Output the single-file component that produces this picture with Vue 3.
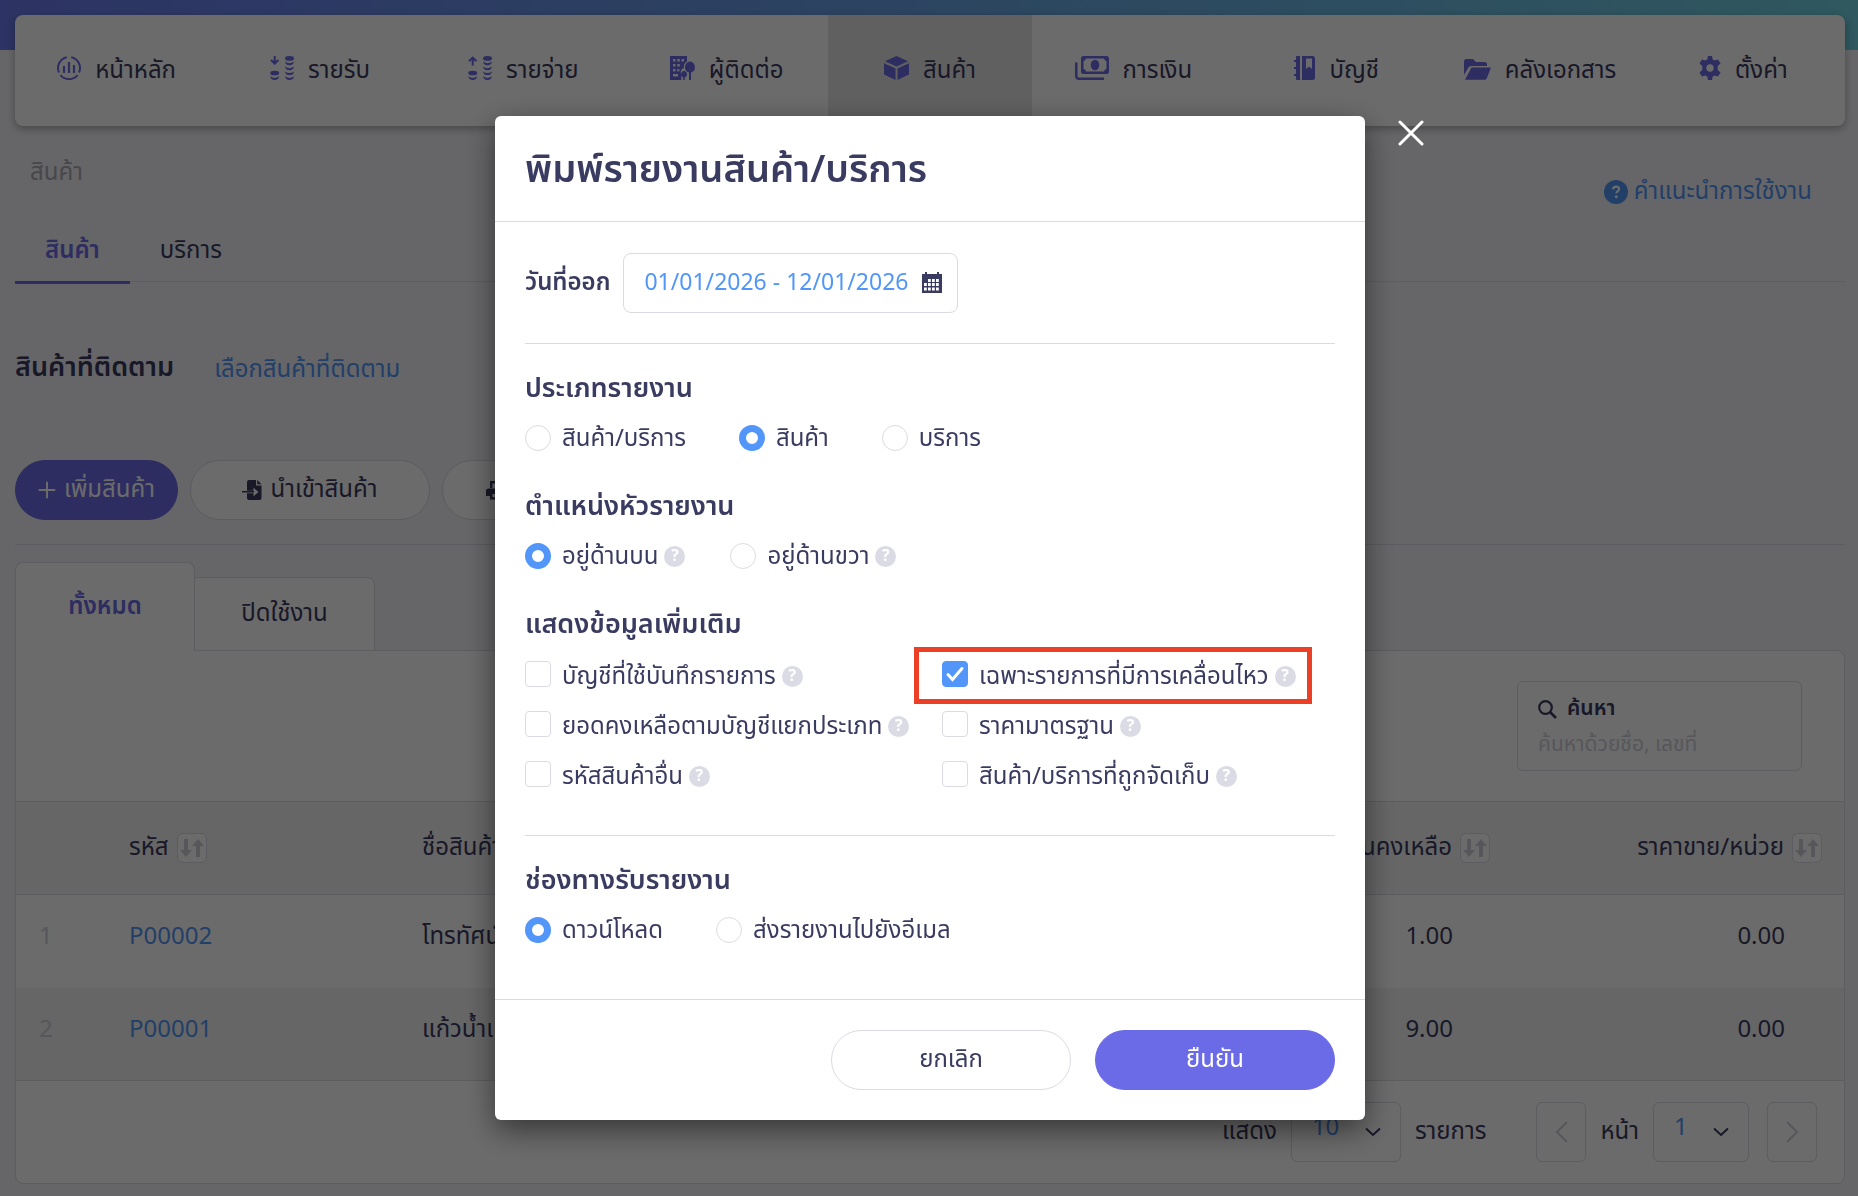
<template>
  <div class="page">
    <nav class="main-nav">
      <a
        v-for="item in menus"
        :key="item.label"
        href="#"
        class="nav-item"
        :class="{ active: item.active }"
      >
        <svg
          class="nav-icon"
          :width="item.width"
          height="24"
          :viewBox="`0 0 ${item.width} 24`"
          v-html="item.icon"
        ></svg>
        <span>{{ item.label }}</span>
      </a>
    </nav>

    <div class="page-head">
      <span class="breadcrumb">สินค้า</span>
      <a href="#" class="help-link">
        <svg width="24" height="24" viewBox="0 0 24 24">
          <circle cx="12" cy="12" r="12" fill="currentColor" />
          <path d="M9 9.400c.1-1.800 1.300-2.700 3.100-2.700s3 .9 3 2.400c0 2-2.700 2-2.700 4.100" fill="none" stroke="#fff" stroke-width="2.200" />
          <circle cx="12.300" cy="16.700" r="1.500" fill="#fff" />
        </svg>
        <span>คำแนะนำการใช้งาน</span>
      </a>
    </div>

    <div class="tabs">
      <button type="button" class="tab active">สินค้า</button>
      <button type="button" class="tab">บริการ</button>
    </div>

    <div class="follow">
      <h2>สินค้าที่ติดตาม</h2>
      <a href="#">เลือกสินค้าที่ติดตาม</a>
    </div>

    <div class="actions">
      <button type="button" class="btn btn-primary btn-add">
        <svg width="18" height="18" viewBox="0 0 18 18">
          <path d="M9 1.500v15M1.500 9h15" stroke="currentColor" stroke-width="2" stroke-linecap="round" />
        </svg>
        เพิ่มสินค้า
      </button>
      <button type="button" class="btn">
        <svg width="20" height="20" viewBox="0 0 20 20">
          <path d="M7 0h7v5.500h5.500V18a2 2 0 0 1-2 2H7a2 2 0 0 1-2-2v-4.800h6.500v3.100l5-4.300-5-4.300v3.100H5V2a2 2 0 0 1 2-2z" fill="currentColor" />
          <path d="M15.200 0l4.300 4.300h-4.300zM0 11h12v1.500H0z" fill="currentColor" />
        </svg>
        นำเข้าสินค้า
      </button>
      <button type="button" class="btn btn-print" aria-label="พิมพ์รายงาน">
        <svg width="20" height="20" viewBox="0 0 20 20">
          <path d="M4 8V1h10l2.500 2.500V8h-2.400V4.500L13 3.400H6.400V8z" fill="currentColor" />
          <path d="M3 8.500h14.500a2.500 2.500 0 0 1 2.500 2.500v5h-3.500v3.500H4V16H0v-5a2.500 2.500 0 0 1 3-2.500zM6.400 14v3.200h7.700V14z" fill="currentColor" fill-rule="evenodd" />
        </svg>
      </button>
    </div>

    <div class="card-tabs">
      <button type="button" class="card-tab active">ทั้งหมด</button>
      <button type="button" class="card-tab">ปิดใช้งาน</button>
    </div>

    <section class="card">
      <div class="search-row">
        <div class="search-box">
          <label for="search">
            <svg width="19" height="19" viewBox="0 0 19 19">
              <circle cx="7.500" cy="7.500" r="6.300" fill="none" stroke="currentColor" stroke-width="2.200" />
              <path d="M12 12l6 6" stroke="currentColor" stroke-width="2.600" />
            </svg>
            ค้นหา
          </label>
          <input id="search" v-model="keyword" type="text" placeholder="ค้นหาด้วยชื่อ, เลขที่" />
        </div>
      </div>

      <table>
        <colgroup>
          <col class="col-no" />
          <col class="col-code" />
          <col class="col-name" />
          <col class="col-qty" />
          <col class="col-price" />
        </colgroup>
        <thead>
          <tr>
            <th></th>
            <th v-for="col in columns" :key="col.label" :class="{ num: col.num }">
              <span class="th-label">
                {{ col.label }}
                <button type="button" class="sort" :aria-label="col.label">
                  <svg width="24" height="20" viewBox="0 0 24 20">
                    <path d="M4 1h4v11h4l-6 7-6-7h4zM16 19h4V8h4l-6-7-6 7h4z" fill="currentColor" />
                  </svg>
                </button>
              </span>
            </th>
          </tr>
        </thead>
        <tbody>
          <tr v-for="(row, i) in products" :key="row.code">
            <td class="row-no">{{ i + 1 }}</td>
            <td><a href="#">{{ row.code }}</a></td>
            <td>{{ row.name }}</td>
            <td class="num">{{ row.qty }}</td>
            <td class="num">{{ row.price }}</td>
          </tr>
        </tbody>
      </table>

      <div class="pager">
        <label for="page-size">แสดง</label>
        <div class="select-box size">
          <select id="page-size" v-model="pageSize">
            <option>10</option>
          </select>
          <svg width="16" height="10" viewBox="0 0 16 10"><path d="M1 1.500l7 6.500 7-6.500" /></svg>
        </div>
        <span class="unit">รายการ</span>
        <button type="button" class="page-btn" aria-label="ก่อนหน้า">
          <svg width="13" height="22" viewBox="0 0 13 22"><path d="M12 1L2 11l10 10" /></svg>
        </button>
        <label for="page-no">หน้า</label>
        <div class="select-box">
          <select id="page-no" v-model="pageNo">
            <option>1</option>
          </select>
          <svg width="16" height="10" viewBox="0 0 16 10"><path d="M1 1.500l7 6.500 7-6.500" /></svg>
        </div>
        <button type="button" class="page-btn next" aria-label="ถัดไป">
          <svg width="13" height="22" viewBox="0 0 13 22"><path d="M1 1l10 10L1 21" /></svg>
        </button>
      </div>
    </section>

    <div class="overlay">
      <form class="modal" role="dialog" aria-labelledby="modal-title" @submit.prevent>
        <button type="button" class="close" aria-label="ปิด">
          <svg width="26" height="26" viewBox="0 0 26 26">
            <path d="M2 2l22 22M24 2L2 24" stroke="currentColor" stroke-width="3" stroke-linecap="round" />
          </svg>
        </button>

        <header class="modal-head">
          <h1 id="modal-title">พิมพ์รายงานสินค้า/บริการ</h1>
        </header>

        <div class="modal-body">
          <div class="date-row">
            <label for="issue-date">วันที่ออก</label>
            <div class="date-box">
              <input id="issue-date" v-model="dateRange" type="text" />
              <svg width="20" height="22" viewBox="0 0 20 22">
                <path d="M3 0h2v3H3zM15 0h2v3h-2zM0 2h20v19H0z" fill="currentColor" />
                <path
                  d="M6 7h2.800v3H6zM10 7h2.800v3H10zM14 7h2.800v3H14zM2 11h2.800v3H2zM6 11h2.800v3H6zM10 11h2.800v3H10zM14 11h2.800v3H14zM2 15.500h2.800v3H2zM6 15.500h2.800v3H6zM10 15.500h2.800v3H10zM14 15.500h2.800v3H14z"
                  fill="#fff"
                />
              </svg>
            </div>
          </div>

          <hr />

          <fieldset>
            <legend>ประเภทรายงาน</legend>
            <div class="radios">
              <label v-for="opt in reportTypes" :key="opt">
                <input v-model="reportType" type="radio" name="type" :value="opt" />
                <span>{{ opt }}</span>
              </label>
            </div>
          </fieldset>

          <fieldset>
            <legend>ตำแหน่งหัวรายงาน</legend>
            <div class="radios with-tip">
              <label v-for="opt in headPositions" :key="opt">
                <input v-model="headPosition" type="radio" name="position" :value="opt" />
                <span>{{ opt }}</span>
                <i class="tip">?</i>
              </label>
            </div>
          </fieldset>

          <fieldset class="extra-info">
            <legend>แสดงข้อมูลเพิ่มเติม</legend>
            <div class="checks">
              <label v-for="opt in extras" :key="opt.label" :class="{ highlight: opt.highlight }">
                <input v-model="opt.checked" type="checkbox" />
                <span>{{ opt.label }}</span>
                <i class="tip">?</i>
              </label>
            </div>
          </fieldset>

          <hr />

          <fieldset>
            <legend>ช่องทางรับรายงาน</legend>
            <div class="radios">
              <label v-for="opt in channels" :key="opt">
                <input v-model="channel" type="radio" name="channel" :value="opt" />
                <span>{{ opt }}</span>
              </label>
            </div>
          </fieldset>
        </div>

        <footer class="modal-foot">
          <button type="button" class="btn">ยกเลิก</button>
          <button type="submit" class="btn btn-primary">ยืนยัน</button>
        </footer>
      </form>
    </div>
  </div>
</template>

<script setup>
import { ref } from 'vue'

// เหรียญซ้อนกันของเมนูรายรับ/รายจ่าย
const coins = `
  <ellipse cx="19.500" cy="2.400" rx="4.500" ry="2.300"/>
  <path d="M15 5.600q4.500 3.400 9 0-.5 3.700-4.500 3.700T15 5.600zM15 10.500q4.500 3.400 9 0-.5 3.700-4.500 3.700T15 10.500zM15 15.400q4.500 3.400 9 0-.5 3.700-4.500 3.700T15 15.400zM15 20.300q4.500 3.400 9 0-.5 3.700-4.500 3.700T15 20.300z"/>
  <ellipse cx="4.700" cy="17" rx="4.500" ry="2.300"/>
  <path d="M.2 20.300q4.500 3.400 9 0-.5 3.700-4.500 3.700T.2 20.300z"/>`

const menus = [
  {
    label: 'หน้าหลัก',
    width: 24,
    icon: `<g fill="none" stroke="currentColor" stroke-width="2"><path d="M9.800 1.200A11 11 0 0 0 2 16.500M14.200 1.200A11 11 0 0 1 22 16.500M3.400 19a11 11 0 0 0 17.200 0"/><path d="M7 10v7M12 6v11M17 9v8" stroke-width="2.200"/></g>`,
  },
  {
    label: 'รายรับ',
    width: 24,
    icon: `<path d="M3.700 0h2v5l2.100-1.800 1.300 1.500L4.700 9 .3 4.700l1.300-1.500L3.700 5z"/>${coins}`,
  },
  {
    label: 'รายจ่าย',
    width: 24,
    icon: `<path d="M3.700 9.500h2V4l2.100 1.900 1.300-1.500L4.700.2.300 4.400l1.300 1.500L3.700 4z"/>${coins}`,
  },
  {
    label: 'ผู้ติดต่อ',
    width: 25,
    icon: `<path fill-rule="evenodd" d="M0 0h17v5.500a6 6 0 0 0-3 6.500c-3 .6-4 4-2.700 7v5H0zM3 3v2.500h2.500V3zM7.300 3v2.500h2.500V3zM11.600 3v2.500h2.500V3zM3 8v2.500h2.500V8zM7.300 8v2.500h2.500V8zM3 13v2.500h2.500V13zM7.300 13v2.500h2V13zM3 18v2.500h5V18z"/><path d="M20 5.500c3 0 5 3.200 5 6 0 2.500-1.500 4.500-4 5V24h-2v-7.500c-2.500-.5-4-2.500-4-5 0-2.800 2-6 5-6zM14 15c2 0 3 1.800 3 3.500 0 1.500-.9 2.500-2.200 2.800V24h-1.600v-2.700c-1.300-.3-2.200-1.300-2.200-2.800 0-1.700 1-3.500 3-3.500z"/>`,
  },
  {
    label: 'สินค้า',
    width: 25,
    active: true,
    icon: `<path d="M12.500 0L24 5.200l-11.500 5.300L1 5.200zM0 7.300l11.500 5.200V24L0 18.500zM25 7.300l-11.500 5.200V24L25 18.500z"/>`,
  },
  {
    label: 'การเงิน',
    width: 34,
    icon: `<path fill-rule="evenodd" d="M8.500 0h23A2.500 2.500 0 0 1 34 2.500v13a2.500 2.500 0 0 1-2.500 2.500h-23A2.500 2.500 0 0 1 6 15.500v-13A2.500 2.500 0 0 1 8.500 0zM11 2.500A3 3 0 0 1 8.500 5v8a3 3 0 0 1 2.500 2.500h18a3 3 0 0 1 2.500-2.500V5A3 3 0 0 1 29 2.500z"/><ellipse cx="20" cy="9" rx="4.300" ry="5.300"/><path d="M0 6.500h2.500V20a1.500 1.500 0 0 0 1.500 1.500h25V24H4a4 4 0 0 1-4-4z"/>`,
  },
  {
    label: 'บัญชี',
    width: 21,
    icon: `<path d="M3 0h3v24H3a1 1 0 0 1-1-1v-3H0v-2h2v-5H0v-2h2V6H0V4h2V1a1 1 0 0 1 1-1z"/><path fill-rule="evenodd" d="M8 0h10.500A2.500 2.500 0 0 1 21 2.500v19a2.500 2.500 0 0 1-2.500 2.500H8zM12 2.500V13l3-2.500L18 13V2.500z"/>`,
  },
  {
    label: 'คลังเอกสาร',
    width: 27,
    icon: `<path d="M2.500 3H9l3 3h8.500A2.500 2.500 0 0 1 23 8.500V10H7a3 3 0 0 0-2.600 1.500L0 19V5.500A2.500 2.500 0 0 1 2.500 3z"/><path d="M7.500 11.500H27l-4.300 11a2 2 0 0 1-1.700 1.200H1z"/>`,
  },
  {
    label: 'ตั้งค่า',
    width: 22,
    icon: `<path fill-rule="evenodd" d="M9 0h4l.7 3.400 2 1.100L19 3.400l2.500 4L18.700 10v4l2.800 2.600-2.500 4-3.300-1.100-2 1.100L13 24H9l-.7-3.400-2-1.100L3 20.600l-2.500-4L3.300 14v-4L.5 7.400l2.500-4 3.300 1.100 2-1.100zM11 8.300a3.700 3.700 0 1 0 0 7.400 3.700 3.700 0 0 0 0-7.400z"/>`,
  },
]

const columns = [
  { label: 'รหัส' },
  { label: 'ชื่อสินค้า' },
  { label: 'จำนวนคงเหลือ', num: true },
  { label: 'ราคาขาย/หน่วย', num: true },
]

const products = ref([
  { code: 'P00002', name: 'โทรทัศน์', qty: '1.00', price: '0.00' },
  { code: 'P00001', name: 'แก้วน้ำเก็บความเย็น', qty: '9.00', price: '0.00' },
])

const keyword = ref('')
const pageSize = ref('10')
const pageNo = ref('1')

// ตัวเลือกในหน้าต่างพิมพ์รายงาน
const dateRange = ref('01/01/2026 - 12/01/2026')
const reportTypes = ['สินค้า/บริการ', 'สินค้า', 'บริการ']
const reportType = ref('สินค้า')
const headPositions = ['อยู่ด้านบน', 'อยู่ด้านขวา']
const headPosition = ref('อยู่ด้านบน')
const channels = ['ดาวน์โหลด', 'ส่งรายงานไปยังอีเมล']
const channel = ref('ดาวน์โหลด')
const extras = ref([
  { label: 'บัญชีที่ใช้บันทึกรายการ', checked: false },
  { label: 'เฉพาะรายการที่มีการเคลื่อนไหว', checked: true, highlight: true },
  { label: 'ยอดคงเหลือตามบัญชีแยกประเภท', checked: false },
  { label: 'ราคามาตรฐาน', checked: false },
  { label: 'รหัสสินค้าอื่น', checked: false },
  { label: 'สินค้า/บริการที่ถูกจัดเก็บ', checked: false },
])
</script>

<style>
body {
  background: #f3f3f8;
}
</style>

<style scoped>
.page,
.page * {
  box-sizing: border-box;
}

.page {
  min-height: 100vh;
  padding: 15px 13px 12px 15px;
  background: #f3f3f8 linear-gradient(90deg, #6b7bee, #69a4e6 50%, #72d2e2) no-repeat 0 0 / 100% 50px;
  color: #3a3b60;
  font-family: 'Noto Sans Thai', 'Noto Sans', sans-serif;
  font-size: 24px;
  font-weight: 400;
  line-height: 36px;
}

.page button,
.page input,
.page select {
  font: inherit;
  color: inherit;
}

a {
  color: #5196f8;
  text-decoration: none;
}

button {
  padding: 0;
  border: 0;
  background: none;
  cursor: pointer;
}

.main-nav {
  display: grid;
  grid-template-columns: repeat(9, 1fr);
  height: 111px;
  border-radius: 8px;
  background: #fff;
  box-shadow: 0 3px 8px rgba(0, 0, 0, 0.3);
}

.nav-item {
  display: flex;
  align-items: center;
  justify-content: center;
  gap: 14px;
  padding-bottom: 6px;
  color: #3a3b60;
  white-space: nowrap;
}

.nav-item span {
  padding-top: 6px;
}

.nav-item.active {
  background: #e5e5e5;
}

.nav-icon {
  color: #6b6be8;
  fill: currentColor;
}

.page-head {
  display: flex;
  justify-content: space-between;
  height: 100px;
  padding: 29px 33px 0 15px;
}

.breadcrumb {
  color: #a9a9b5;
}

.help-link {
  display: flex;
  align-items: center;
  gap: 6px;
  height: 74px;
}

.tabs {
  display: flex;
  border-bottom: 1px solid #dbdbe6;
}

.tab {
  padding: 7px 30px 12px;
  border-bottom: 3px solid transparent;
  margin-bottom: -3px;
}

.page .tab.active {
  color: #6b6be8;
  border-color: #6b6be8;
  font-weight: 600;
}

.follow {
  display: flex;
  align-items: flex-end;
  gap: 40px;
  margin-top: 66px;
}

.follow h2 {
  margin: 0;
  font-size: 27px;
  line-height: 40px;
  font-weight: 600;
}

.actions {
  display: flex;
  gap: 12px;
  margin-top: 72px;
  padding-bottom: 24px;
  border-bottom: 1px solid #dbdbe6;
}

.btn {
  display: flex;
  align-items: center;
  justify-content: center;
  gap: 8px;
  width: 240px;
  height: 60px;
  border: 1px solid #dbdbe6;
  border-radius: 30px;
  background: #fff;
}

.page .btn-primary {
  border-color: #6b6be8;
  background: #6b6be8;
  color: #fff;
}

.btn-add {
  width: 163px;
}

.btn-print {
  justify-content: flex-start;
  padding-left: 43px;
}

.card-tabs {
  display: flex;
  align-items: flex-end;
  margin-top: 17px;
}

.card-tab {
  width: 180px;
  height: 73px;
  border: 1px solid #dbdbe6;
  border-width: 1px 1px 0 0;
  border-radius: 0 8px 0 0;
  background: #fff;
}

.page .card-tab.active {
  position: relative;
  height: 89px;
  margin-bottom: -1px;
  border-width: 1px 1px 0;
  border-radius: 8px 8px 0 0;
  color: #6b6be8;
  font-weight: 600;
}

.card {
  border: 1px solid #dbdbe6;
  border-radius: 0 8px 8px 8px;
  background: #fff;
}

.search-row {
  display: flex;
  justify-content: flex-end;
  padding: 30px 42px;
}

.search-box {
  width: 285px;
  height: 90px;
  padding: 10px 20px;
  border: 1px solid #dbdbe6;
  border-radius: 6px;
  font-size: 21px;
  line-height: 34px;
}

.search-box label {
  display: flex;
  align-items: center;
  gap: 10px;
  font-weight: 600;
}

.search-box input {
  display: block;
  width: 100%;
  height: 36px;
  padding: 0;
  border: 0;
  outline: none;
  background: none;
}

.search-box input::placeholder {
  color: #cfcfd9;
}

table {
  width: 100%;
  border-collapse: collapse;
  table-layout: fixed;
  border-top: 1px solid #dbdbe6;
  border-bottom: 1px solid #dbdbe6;
}

.col-no {
  width: 85px;
}

.col-code {
  width: 293px;
}

.col-qty {
  width: 331px;
}

.col-price {
  width: 332px;
}

th,
td {
  height: 93px;
  padding: 0 28px;
  text-align: left;
  font-weight: inherit;
  white-space: nowrap;
}

td {
  padding-bottom: 8px;
}

th {
  background: #f3f3f3;
  border-bottom: 1px solid #dbdbe6;
}

th.num {
  padding-right: 22px;
  text-align: right;
}

td.num {
  padding-right: 59px;
  text-align: right;
}

tbody tr:nth-child(even) {
  background: #f3f3f3;
}

.row-no {
  padding-left: 23px;
  color: #cfcfd9;
}

.th-label {
  display: inline-flex;
  align-items: center;
  gap: 8px;
}

.page .sort {
  display: flex;
  align-items: center;
  justify-content: center;
  width: 30px;
  height: 30px;
  border: 1px solid #dbdbe6;
  border-radius: 6px;
  background: #fff;
  color: #cfcfd9;
}

.pager {
  display: flex;
  align-items: center;
  justify-content: flex-end;
  gap: 14px;
  padding: 21px 27px 21px;
}

.select-box {
  position: relative;
  width: 96px;
  height: 60px;
}

.select-box.size {
  width: 110px;
}

.page .select-box select {
  width: 100%;
  height: 100%;
  padding: 0 20px 8px;
  border: 1px solid #dbdbe6;
  border-radius: 6px;
  background: #fff;
  color: #5196f8;
  appearance: none;
}

.pager svg {
  fill: none;
  stroke: currentColor;
  stroke-width: 2;
}

.select-box svg {
  position: absolute;
  right: 20px;
  top: 25px;
}

.unit {
  margin-right: 36px;
}

.page .page-btn {
  display: flex;
  align-items: center;
  justify-content: center;
  width: 50px;
  height: 60px;
  border: 1px solid #dbdbe6;
  border-radius: 6px;
  color: #cfcfd9;
}

.page-btn.next {
  margin-left: 4px;
}

.overlay {
  position: fixed;
  inset: 0;
  display: flex;
  align-items: flex-start;
  justify-content: center;
  padding: 116px 0 0 2px;
  background: rgba(0, 0, 0, 0.58);
}

.modal {
  position: relative;
  width: 870px;
  border-radius: 6px;
  background: #fff;
  box-shadow: 0 10px 30px rgba(0, 0, 0, 0.5);
}

.page .close {
  position: absolute;
  top: 4px;
  left: calc(100% + 33px);
  height: 26px;
  color: #fff;
}

.close svg {
  display: block;
}

.modal-head {
  padding: 30px 30px 26px;
  border-bottom: 1px solid #dbdbe6;
}

.modal-head h1 {
  margin: 0;
  font-size: 38px;
  line-height: 49px;
  font-weight: 600;
}

.modal-body {
  padding: 31px 30px 50px;
}

.date-row {
  display: flex;
  align-items: center;
  gap: 13px;
}

.date-row label {
  font-weight: 600;
}

.date-box {
  display: flex;
  align-items: center;
  gap: 4px;
  width: 335px;
  height: 60px;
  padding: 0 15px 0 20px;
  border: 1px solid #dbdbe6;
  border-radius: 8px;
}

.page .date-box input {
  flex: 1;
  min-width: 0;
  padding: 0;
  border: 0;
  outline: none;
  background: none;
  color: #5196f8;
  font-size: 23px;
}

hr {
  margin: 30px 0 25px;
  border: 0;
  border-top: 1px solid #dbdbe6;
}

fieldset {
  margin: 0 0 30px;
  padding: 0;
  border: 0;
}

fieldset:last-child {
  margin-bottom: 0;
}

.extra-info {
  margin-bottom: 40px;
}

legend {
  padding: 0;
  font-size: 27px;
  line-height: 40px;
  font-weight: 600;
}

.radios {
  display: flex;
  gap: 53px;
  margin-top: 10px;
}

.radios.with-tip {
  gap: 45px;
}

.radios label,
.checks label {
  display: flex;
  align-items: center;
  white-space: nowrap;
}

.radios span,
.checks span {
  padding-top: 2px;
}

.radios input,
.checks input {
  flex: none;
  width: 26px;
  height: 26px;
  margin: 0 11px 0 0;
  border: 1px solid #dbdbe6;
  background: #fff;
  appearance: none;
}

.radios input {
  border-radius: 50%;
}

.radios input:checked {
  border: 7px solid #5196f8;
}

.checks {
  display: grid;
  grid-template-columns: 417px 1fr;
  row-gap: 12px;
  margin-top: 12px;
}

.checks label {
  position: relative;
  justify-self: start;
}

.checks input {
  margin-bottom: 4px;
  border-radius: 4px;
}

.checks input:checked {
  border-color: #5196f8;
  background: #5196f8
    url("data:image/svg+xml,%3Csvg xmlns='http://www.w3.org/2000/svg' viewBox='0 0 24 24'%3E%3Cpath d='M5 12.500l4.500 5L19 6.500' fill='none' stroke='white' stroke-width='3' stroke-linecap='round'/%3E%3C/svg%3E")
    center / 100%;
}

.highlight::after {
  content: '';
  position: absolute;
  inset: -10px -16px -9px -28px;
  border: 5px solid #eb4025;
}

.tip {
  width: 21px;
  height: 21px;
  margin-left: 6px;
  border-radius: 50%;
  background: #dbdbe6;
  color: #fff;
  font-size: 16px;
  line-height: 21px;
  font-style: normal;
  font-weight: 700;
  text-align: center;
}

.modal-foot {
  display: flex;
  justify-content: flex-end;
  gap: 24px;
  padding: 30px;
  border-top: 1px solid #dbdbe6;
}
</style>
